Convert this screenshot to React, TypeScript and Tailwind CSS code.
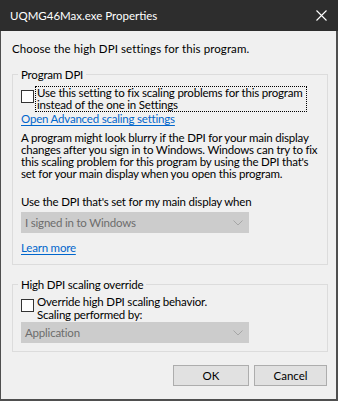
const font = { fontFamily: 'Lato, "Liberation Sans", sans-serif' }

const Chevron = () => (
  <svg width="10" height="6" viewBox="0 0 10 6" className="mr-[5px]">
    <polyline points="0.5,0.5 5,5 9.5,0.5" fill="none" stroke="#a6a6a6" strokeWidth="1" />
  </svg>
)

const Dropdown = ({ value }: { value: string }) => (
  <div className="flex h-[21px] w-[228px] items-center justify-between border border-[#cccccc] bg-[#cccccc] pl-[3px] text-[#6d6d6d]">
    <span>{value}</span>
    <Chevron />
  </div>
)

const Checkbox = () => <div className="h-[13px] w-[13px] shrink-0 border border-[#333333] bg-white" />

const Group = ({ title, children }: { title: string; children: React.ReactNode }) => (
  <fieldset className="mx-[11px] w-[316px] border border-[#dcdcdc] pl-[8px]">
    <legend className="-ml-[3px] px-[3px] leading-[13px]">{title}</legend>
    {children}
  </fieldset>
)

export default function App() {
  return (
    <div
      style={font}
      className="flex h-[401px] w-[338px] flex-col border-b-2 border-l border-r-2 border-[#4f4f4f] bg-[#f0f0f0] text-[11.5px] leading-[13px] tracking-[-0.2px] text-black"
    >
      <div className="-ml-px -mr-[2px] flex h-[31px] shrink-0 items-center justify-between bg-[#2d2d2d] pl-[10px] pr-[11px] tracking-normal text-white">
        <span>UQMG46Max.exe Properties</span>
        <svg width="11" height="11" viewBox="0 0 11 11">
          <path d="M0.5 0.5 L10.5 10.5 M10.5 0.5 L0.5 10.5" stroke="#ffffff" strokeWidth="1.1" />
        </svg>
      </div>

      <p className="ml-[11px] mt-[11px] tracking-[0.1px]">Choose the high DPI settings for this program.</p>

      <div className="mt-[13px]">
        <Group title="Program DPI">
          <div className="mt-[5px] flex items-start gap-[1px]">
            <div className="mt-[4px]">
              <Checkbox />
            </div>
            <div className="border border-dotted border-black pl-[1px] pr-[3px] leading-[12px] whitespace-nowrap">
              Use this setting to fix scaling problems for this program
              <br />
              instead of the one in Settings
            </div>
          </div>
          <div className="text-[#0066cc] underline underline-offset-[2px]">Open Advanced scaling settings</div>

          <p className="mt-[7px] leading-[12px] whitespace-nowrap">
            A program might look blurry if the DPI for your main display
            <br />
            changes after you sign in to Windows. Windows can try to fix
            <br />
            this scaling problem for this program by using the DPI that's
            <br />
            set for your main display when you open this program.
          </p>

          <p className="mt-[15px]">Use the DPI that's set for my main display when</p>
          <div className="mt-[4px]">
            <Dropdown value="I signed in to Windows" />
          </div>

          <div className="mb-[10px] mt-[8px] text-[#0066cc] underline underline-offset-[2px]">Learn more</div>
        </Group>
      </div>

      <div className="mt-[13px]">
        <Group title="High DPI scaling override">
          <div className="mt-[4px] flex items-start gap-[3px]">
            <div className="mt-[4px]">
              <Checkbox />
            </div>
            <div className="whitespace-nowrap">
              Override high DPI scaling behavior.
              <br />
              Scaling performed by:
            </div>
          </div>
          <div className="mb-[8px] mt-[1px]">
            <Dropdown value="Application" />
          </div>
        </Group>
      </div>

      <div className="mr-[9px] mt-[13px] flex justify-end gap-[5px] tracking-normal">
        <button className="h-[21px] w-[76px] border border-[#adadad] bg-[#e1e1e1]">OK</button>
        <button className="h-[21px] w-[73px] border border-[#adadad] bg-[#e1e1e1]">Cancel</button>
      </div>
    </div>
  )
}
